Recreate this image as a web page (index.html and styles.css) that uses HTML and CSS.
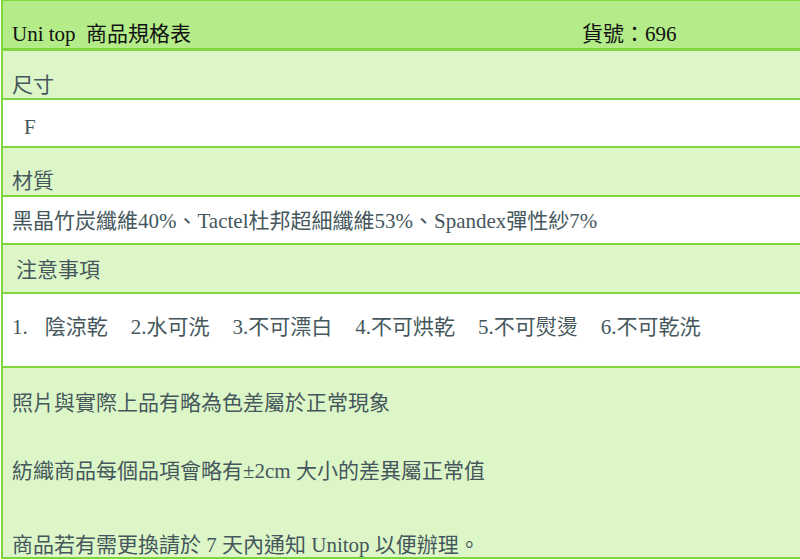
FILE: index.html
```html
<!DOCTYPE html>
<html lang="zh-Hant">

<head>
    <meta charset="UTF-8">
    <meta name="viewport" content="width=device-width, initial-scale=1.0">
    <title>Uni top 商品規格表</title>
    <link rel="stylesheet" href="styles.css">
</head>

<body>
    <div class="spec">
        <div class="row head">
            <span>Uni top &nbsp;商品規格表</span>
            <span>貨號：696</span>
        </div>
        <div class="row label size-label">尺寸</div>
        <div class="row value size-value">F</div>
        <div class="row label mat-label">材質</div>
        <div class="row value mat-value">黑晶竹炭纖維40%、Tactel杜邦超細纖維53%、Spandex彈性紗7%</div>
        <div class="row label care-label">注意事項</div>
        <div class="row value care">
            <span><span class="num">1.</span>陰涼乾</span>
            <span>2.水可洗</span>
            <span>3.不可漂白</span>
            <span>4.不可烘乾</span>
            <span>5.不可熨燙</span>
            <span>6.不可乾洗</span>
        </div>
        <div class="row label notes">
            <p>照片與實際上品有略為色差屬於正常現象</p>
            <p>紡織商品每個品項會略有±2cm 大小的差異屬正常值</p>
            <p>商品若有需更換請於 7 天內通知 Unitop 以便辦理。</p>
        </div>
    </div>
</body>

</html>
```

FILE: styles.css
```css
body {
    margin: 0;
    background-color: #fff;
    font-family: "Liberation Serif", "Noto Sans CJK TC", serif;
    font-size: 21px;
    line-height: 24px;
    overflow: hidden;
}

.spec {
    margin-left: 1px;
    border-left: 2px solid #7fd63e;
    border-top: 1px solid #7fd63e;
}

.row {
    box-sizing: border-box;
    padding-left: 9px;
    border-bottom: 2px solid #7fd63e;
    color: #45575c;
    white-space: nowrap;
}

.head {
    display: grid;
    grid-template-columns: 570px 1fr;
    height: 50px;
    padding-top: 21px;
    border-bottom-width: 3px;
    background-color: #b3ec89;
    color: #111;
}

.label {
    background-color: #dcf6c8;
}

.value {
    background-color: #fff;
}

.size-label {
    height: 49px;
    padding-top: 22px;
}

.size-value {
    height: 48px;
    padding-top: 15px;
    padding-left: 21px;
}

.mat-label {
    height: 49px;
    padding-top: 21px;
}

.mat-value {
    height: 48px;
    padding-top: 12px;
}

.care-label {
    height: 49px;
    padding-top: 13px;
    padding-left: 13px;
}

.care {
    display: flex;
    gap: 23px;
    height: 74px;
    padding-top: 21px;
}

.care .num {
    margin-right: 17px;
}

.notes {
    height: 191px;
    padding-top: 23px;
}

.notes p {
    margin: 0;
}

.notes p + p {
    margin-top: 44px;
}

.notes p:last-child {
    margin-top: 50px;
}
```
